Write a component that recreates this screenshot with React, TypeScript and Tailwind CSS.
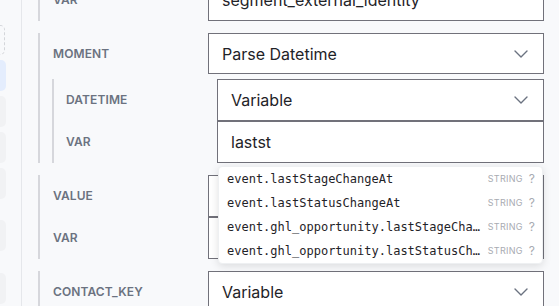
import React from "react";

const Chevron = () => (
  <svg width="24" height="24" viewBox="0 0 24 24" fill="none" stroke="#6b7280" strokeWidth="1.4" strokeLinecap="round" strokeLinejoin="round">
    <path d="m6 9 6 6 6-6" />
  </svg>
);

const Label = ({ children, pl = "pl-[13px]" }: { children: React.ReactNode; pl?: string }) => (
  <div className={`flex-1 ${pl} text-[12px] font-semibold tracking-[0.1px] text-[#6b7280] uppercase`}>{children}</div>
);

const Select = ({ value, w, h = "h-[41px]", extra = "" }: { value: string; w: string; h?: string; extra?: string }) => (
  <div className={`${w} ${h} ${extra} bg-white border border-[#71717a] flex items-center justify-between pl-[13px] pr-[10px] text-[16px] text-[#1f2328]`}>
    <span>{value}</span>
    <Chevron />
  </div>
);

const Input = ({ value, w, h = "h-[42px]", extra = "" }: { value: string; w: string; h?: string; extra?: string }) => (
  <div className={`${w} ${h} ${extra} bg-white border border-[#71717a] flex items-center pl-[13px] text-[16px] text-[#1f2328]`}>
    <span>{value}</span>
  </div>
);

const items = [
  { name: "event.lastStageChangeAt" },
  { name: "event.lastStatusChangeAt" },
  { name: "event.ghl_opportunity.lastStageChangeAt" },
  { name: "event.ghl_opportunity.lastStatusChangeAt" },
];

export default function App() {
  return (
    <div
      className="w-[559px] h-[306px] overflow-hidden bg-[#f8f9fb] flex"
      style={{ fontFamily: "Inter, 'Noto Sans', sans-serif" }}
    >
      {/* sidebar */}
      <div className="w-[22px] shrink-0 border-r border-[#e5e7eb] flex flex-col overflow-hidden">
        <div className="ml-[-100px] w-[105px] mt-[25px] h-[30px] rounded-[5px] border border-dashed border-[#d4d6da]" />
        <div className="ml-[-100px] w-[106px] mt-[5px] h-[31px] rounded-[5px] bg-[#e4edfd]" />
        <div className="ml-[-100px] w-[106px] mt-[5px] h-[31px] rounded-[5px] bg-[#f1f2f4]" />
        <div className="ml-[-100px] w-[106px] mt-[5px] h-[31px] rounded-[5px] bg-[#f1f2f4]" />
        <div className="ml-[-100px] w-[106px] mt-[5px] h-[31px] rounded-[5px] bg-[#f1f2f4]" />
        <div className="ml-[-100px] w-[106px] mt-[21px] h-[31px] rounded-[5px] bg-[#f1f2f4]" />
        <div className="ml-[-100px] w-[106px] mt-[22px] h-[31px] rounded-[5px] bg-[#f1f2f4]" />
      </div>

      {/* main */}
      <div className="flex-1 pl-[16px] pr-[15px] mt-[-21px] flex flex-col gap-[12px]">
        {/* VAR section (cut) */}
        <div className="border-l-2 border-[#d6d7dc] flex items-center">
          <Label>VAR</Label>
          <Input value="segment_external_identity" w="w-[336px]" />
        </div>

        {/* MOMENT */}
        <div className="border-l-2 border-[#d6d7dc] flex flex-col">
          <div className="flex items-center">
            <Label>MOMENT</Label>
            <Select value="Parse Datetime" w="w-[336px]" />
          </div>
          <div className="ml-[12px] mt-[5px] border-l-2 border-[#d6d7dc] flex flex-col">
            <div className="flex items-center">
              <Label pl="pl-[12px]">DATETIME</Label>
              <Select value="Variable" w="w-[327px]" h="h-[42px]" extra="pl-[13px]" />
            </div>
            <div className="flex items-center">
              <Label pl="pl-[12px]">VAR</Label>
              <div className="relative">
                <Input value="lastst" w="w-[327px]" />
                <div className="absolute left-[1px] top-[45px] w-[325px] z-10 bg-white rounded-[4px] shadow-[0_2px_8px_rgba(0,0,0,0.12)] border border-[#eef0f2] flex flex-col">
                  {items.map((it) => (
                    <div key={it.name} className="h-[24px] flex items-center pl-[8px] pr-[7px]">
                      <span
                        className="flex-1 truncate text-[12px] text-[#1f2328]"
                        style={{ fontFamily: "'DejaVu Sans Mono', monospace" }}
                      >
                        {it.name}
                      </span>
                      <span className="ml-[7px] text-[9px] tracking-[0.3px] text-[#a8abb2]">STRING</span>
                      <span className="ml-[6px] text-[12px] text-[#a8abb2]">?</span>
                    </div>
                  ))}
                </div>
              </div>
            </div>
          </div>
        </div>

        {/* VALUE / VAR */}
        <div className="border-l-2 border-[#d6d7dc] flex flex-col">
          <div className="flex items-center">
            <Label>VALUE</Label>
            <Input value="" w="w-[336px]" />
          </div>
          <div className="flex items-center">
            <Label>VAR</Label>
            <Input value="" w="w-[336px]" />
          </div>
        </div>

        {/* CONTACT_KEY */}
        <div className="border-l-2 border-[#d6d7dc] flex items-center">
          <Label>CONTACT_KEY</Label>
          <Select value="Variable" w="w-[336px]" h="h-[42px]" />
        </div>
      </div>
    </div>
  );
}
